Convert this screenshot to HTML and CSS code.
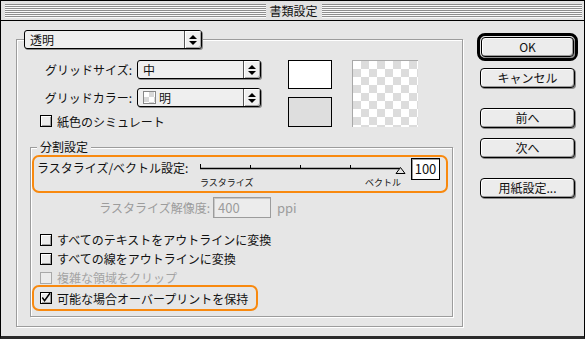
FILE: index.html
```html
<!DOCTYPE html>
<html lang="ja">
<head>
  <meta charset="UTF-8">
  <title>書類設定</title>
  <link rel="stylesheet" href="styles.css">
</head>
<body>

  <div class="window">
    <div class="titlebar">
      <div class="stripes"></div>
      <span class="title">書類設定</span>
      <div class="stripes"></div>
    </div>

    <div class="content">
      <div class="group outer">
        <div class="head">
          <div class="popup wide">
            <span class="val">透明</span>
            <span class="arrows"><i class="up"></i><i class="dn"></i></span>
          </div>
        </div>

        <div class="grid-area">
          <div class="fields">
            <div class="row">
              <span class="lbl">グリッドサイズ:</span>
              <div class="popup small">
                <span class="val">中</span>
                <span class="arrows"><i class="up"></i><i class="dn"></i></span>
              </div>
            </div>
            <div class="row">
              <span class="lbl">グリッドカラー:</span>
              <div class="popup small">
                <span class="val"><span class="mini-checker"></span>明</span>
                <span class="arrows"><i class="up"></i><i class="dn"></i></span>
              </div>
            </div>
            <div class="check first">
              <span class="box"></span>紙色のシミュレート
            </div>
          </div>
          <div class="swatches">
            <div class="swatch white"></div>
            <div class="swatch gray"></div>
          </div>
          <div class="checker"></div>
        </div>

        <div class="group inner">
          <div class="legend">分割設定</div>

          <div class="hl hl-slider">
            <span class="vec-label">ラスタライズ/ベクトル設定:</span>
            <div class="slider">
              <svg width="208" height="16" viewBox="0 0 208 16">
                <line x1="2" y1="8.5" x2="202" y2="8.5" stroke="#000" stroke-width="1.5"/>
                <line x1="2.5" y1="4" x2="2.5" y2="9" stroke="#000"/>
                <line x1="52.5" y1="5" x2="52.5" y2="9" stroke="#000"/>
                <line x1="102.5" y1="5" x2="102.5" y2="9" stroke="#000"/>
                <line x1="152.5" y1="5" x2="152.5" y2="9" stroke="#000"/>
                <polygon points="202.5,7.5 198,13.5 207,13.5" fill="#e6e6e6" stroke="#000"/>
              </svg>
              <div class="ends">
                <span>ラスタライズ</span>
                <span>ベクトル</span>
              </div>
            </div>
            <div class="num-box">100</div>
          </div>

          <div class="res-row">
            <span class="res-label">ラスタライズ解像度:</span>
            <div class="res-box">400</div>
            <span class="unit">ppi</span>
          </div>

          <div class="checks">
            <div class="check"><span class="box"></span>すべてのテキストをアウトラインに変換</div>
            <div class="check"><span class="box"></span>すべての線をアウトラインに変換</div>
            <div class="check disabled"><span class="box"></span>複雑な領域をクリップ</div>
            <div class="hl hl-check">
              <div class="check">
                <span class="box">
                  <svg width="12" height="12" viewBox="0 0 12 12">
                    <path d="M2.5 5.5 L5 9 L11 0.5" fill="none" stroke="#000" stroke-width="1.6"/>
                  </svg>
                </span>可能な場合オーバープリントを保持
              </div>
            </div>
          </div>
        </div>
      </div>

      <div class="buttons">
        <div class="default-ring"><div class="btn">OK</div></div>
        <div class="btn cancel">キャンセル</div>
        <div class="btn prev">前へ</div>
        <div class="btn next">次へ</div>
        <div class="btn paper">用紙設定...</div>
      </div>
    </div>
  </div>

</body>
</html>
```

FILE: styles.css
```css
* {
  box-sizing: border-box;
}

body {
  margin: 0;
  background: #3a3a3a;
  font-family: "Noto Sans CJK JP", "Noto Sans", sans-serif;
  font-size: 12px;
  color: #111;
}

.window {
  width: 585px;
  height: 339px;
  background: #e6e6e6;
  border: 1px solid #000;
  border-bottom: 3px solid #2a2a2a;
}

/* title bar */
.titlebar {
  display: flex;
  align-items: center;
  height: 20px;
  padding: 0 2px 0 4px;
  background: #e2e2e2;
  border-bottom: 1px solid #000;
}

.stripes {
  flex: 1;
  height: 14px;
  background: repeating-linear-gradient(to bottom, #8e8e8e 0 1px, #fafafa 1px 2px);
}

.title {
  padding: 0 4px;
  line-height: 18px;
}

.content {
  display: flex;
  align-items: flex-start;
}

/* etched group frames */
.group {
  border: 1px solid #9c9c9c;
  box-shadow: inset 1px 1px 0 #fff, 1px 1px 0 #fff;
}

.outer {
  margin: 18px 0 0 15px;
  width: 447px;
  height: 288px;
}

.outer .head {
  display: flex;
  margin: -10px 0 0 7px;
}

/* popup menus */
.popup {
  display: flex;
  height: 19px;
  border: 1px solid #000;
  border-radius: 3px;
  background: #efefef;
  box-shadow: 1px 1px 0 #8a8a8a;
}

.popup.wide {
  width: 178px;
}

.popup.small {
  width: 124px;
}

.popup .val {
  flex: 1;
  display: flex;
  align-items: center;
  padding-left: 5px;
  line-height: 17px;
}

.popup .arrows {
  width: 17px;
  display: flex;
  flex-direction: column;
  align-items: center;
  justify-content: center;
  gap: 2px;
  border-left: 1px solid #555;
  border-radius: 0 2px 2px 0;
  box-shadow: inset 1px 1px 0 #fff, inset -1px -1px 0 #a8a8a8;
}

.up {
  border-left: 4px solid transparent;
  border-right: 4px solid transparent;
  border-bottom: 4px solid #000;
}

.dn {
  border-left: 4px solid transparent;
  border-right: 4px solid transparent;
  border-top: 4px solid #000;
}

.mini-checker {
  width: 13px;
  height: 13px;
  margin: 0 3px 0 0;
  border: 1px solid #888;
  background: conic-gradient(#d8d8d8 25%, #fff 0 50%, #d8d8d8 0 75%, #fff 0) 0 0 / 10px 10px;
}

/* grid options */
.grid-area {
  display: flex;
  margin: 11px 0 0 24px;
}

.fields {
  width: 220px;
}

.row {
  display: flex;
  align-items: center;
  height: 19px;
}

.row + .row {
  margin-top: 9px;
}

.lbl {
  width: 91px;
  margin-right: 5px;
  text-align: right;
  white-space: nowrap;
}

.swatches {
  margin-left: 27px;
}

.swatch {
  width: 44px;
  border: 1px solid #000;
}

.swatch.white {
  height: 29px;
  background: #fff;
}

.swatch.gray {
  height: 30px;
  margin-top: 8px;
  background: #dedede;
}

.checker {
  width: 66px;
  height: 67px;
  margin-left: 20px;
  border-top: 1px solid #a8a8a8;
  border-left: 1px solid #a8a8a8;
  background: conic-gradient(#dcdcdc 25%, #fff 0 50%, #dcdcdc 0 75%, #fff 0) 0 0 / 16px 16px;
}

/* checkboxes */
.check {
  display: flex;
  align-items: center;
  height: 19px;
  white-space: nowrap;
}

.check.first {
  height: 12px;
  margin: 8px 0 0 -1px;
}

.box {
  width: 12px;
  height: 12px;
  margin-right: 5px;
  border: 1px solid #000;
  background: #ececec;
  box-shadow: inset 1px 1px 0 #fff, inset -1px -1px 0 #a0a0a0;
  display: flex;
}

.box svg {
  margin: -1px 0 0 -1px;
}

.check.disabled {
  color: #a4a4a4;
}

.check.disabled .box {
  border-color: #a8a8a8;
  box-shadow: none;
}

/* 分割設定 */
.inner {
  margin: 20px 0 0 13px;
  width: 423px;
  height: 170px;
}

.legend {
  width: max-content;
  margin: -8px 0 0 6px;
  padding: 0 3px;
  background: #e6e6e6;
  line-height: 14px;
}

.hl {
  border: 2px solid #f8890f;
  border-radius: 7px;
}

.hl-slider {
  display: flex;
  align-items: flex-start;
  width: 416px;
  height: 38px;
  margin: 1px 0 0 1px;
  padding-left: 3px;
}

.vec-label {
  width: 161px;
  margin-top: 4px;
  line-height: 14px;
  white-space: nowrap;
}

.slider {
  width: 208px;
  margin-top: 3px;
}

.slider svg {
  display: block;
}

.ends {
  display: flex;
  justify-content: space-between;
  padding: 0 5px 0 2px;
  margin-top: 1px;
  font-size: 9px;
  line-height: 11px;
}

.num-box {
  width: 29px;
  height: 22px;
  margin: 1px 0 0 5px;
  border: 1px solid #000;
  background: #fff;
  box-shadow: inset 1px 1px 0 #9a9a9a;
  text-align: center;
  font-size: 13px;
  line-height: 20px;
}

.res-row {
  display: flex;
  align-items: center;
  height: 21px;
  margin: 4px 0 0 61px;
  color: #9c9c9c;
}

.res-label {
  width: 118px;
  margin-right: 3px;
  text-align: right;
  white-space: nowrap;
}

.res-box {
  width: 58px;
  height: 21px;
  padding-left: 4px;
  border: 1px solid #9c9c9c;
  box-shadow: inset 1px 1px 0 #c8c8c8;
  background: #ececec;
  font-size: 13px;
  line-height: 19px;
}

.unit {
  margin-left: 6px;
  font-size: 13px;
}

.checks {
  margin: 12px 0 0 9px;
}

.hl-check {
  width: 226px;
  height: 26px;
  margin: -2px 0 0 -8px;
  padding-left: 6px;
  display: flex;
  align-items: center;
}

/* buttons */
.buttons {
  display: flex;
  flex-direction: column;
  margin: 12px 0 0 14px;
}

.default-ring {
  width: 101px;
  height: 28px;
  padding: 1px;
  border: 3px solid #000;
  border-radius: 8px;
}

.btn {
  width: 95px;
  height: 20px;
  border: 1px solid #000;
  border-radius: 4px;
  background: #ececec;
  box-shadow: inset 1px 1px 0 #fff, inset -1px -1px 0 #9a9a9a, 1px 1px 0 #8a8a8a;
  text-align: center;
  line-height: 18px;
  white-space: nowrap;
}

.default-ring .btn {
  width: 100%;
}

.cancel {
  margin: 7px 0 0 3px;
}

.prev {
  margin: 20px 0 0 3px;
}

.next {
  margin: 10px 0 0 3px;
}

.paper {
  margin: 20px 0 0 3px;
}
```
